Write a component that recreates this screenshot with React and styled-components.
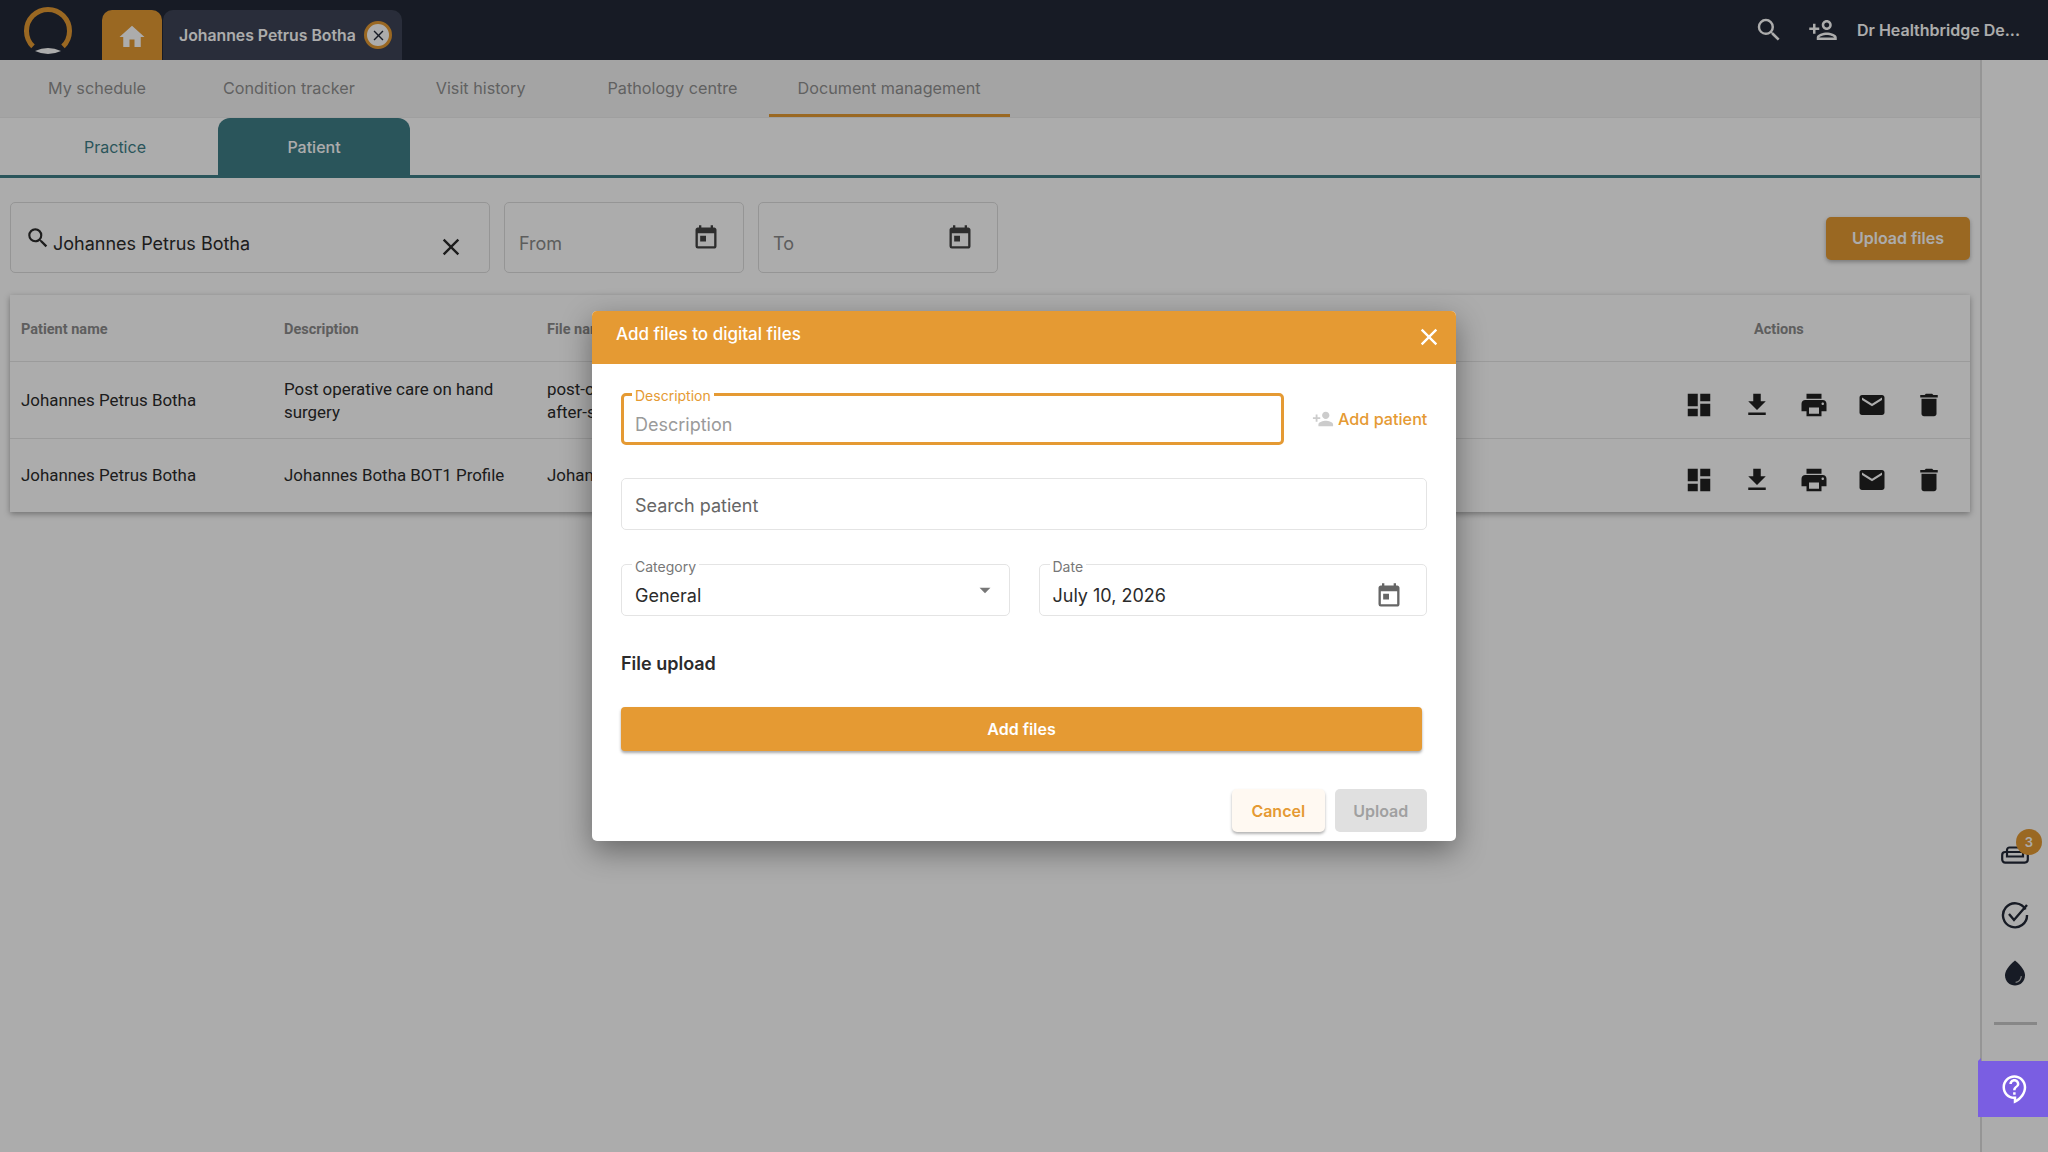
import React from 'react'
import styled, { createGlobalStyle } from 'styled-components'
import {
  MdHome, MdSearch, MdClose, MdToday, MdDashboard, MdFileDownload, MdPrint,
  MdEmail, MdDelete, MdOutlinePersonAdd, MdPersonAdd, MdArrowDropDown,
  MdOutlineContactSupport
} from 'react-icons/md'

const ORANGE = '#e59a33'
const TEAL = '#3f7f88'
const SANS = 'Inter, "Noto Sans", sans-serif'
const TABLE = 'Roboto, sans-serif'

const Global = createGlobalStyle`
  html, body { margin: 0; height: 100%; background: #fff; }
  * { box-sizing: border-box; }
  body { font-family: ${SANS}; overflow: hidden; }
`

const Page = styled.div`
  display: flex;
  flex-direction: column;
  width: 2048px;
  height: 1152px;
  position: relative;
  overflow: hidden;
`

const Header = styled.header`
  display: flex;
  align-items: flex-end;
  height: 60px;
  flex: none;
  background: #232937;
  padding-left: 24px;
`

const Logo = styled.svg`
  width: 48px;
  height: 50px;
  margin: 0 30px 5px 0;
`

const HomeTab = styled.div`
  width: 60px;
  height: 50px;
  background: ${ORANGE};
  border-radius: 10px 10px 0 0;
  color: #fff;
  display: flex;
  align-items: center;
  justify-content: center;
  font-size: 30px;
  padding-top: 4px;
`

const PatientTab = styled.div`
  display: flex;
  align-items: center;
  width: 239px;
  height: 50px;
  margin-left: 1px;
  padding: 0 10px 0 16px;
  background: #3d4456;
  border-radius: 10px 10px 0 0;
  color: #fff;
  font-size: 15.8px;
  font-weight: 600;
  justify-content: space-between;
`

const TabClose = styled.span`
  width: 28px;
  height: 28px;
  border-radius: 50%;
  background: #fff;
  border: 3px solid ${ORANGE};
  color: #232937;
  display: flex;
  align-items: center;
  justify-content: center;
  font-size: 17px;
`

const HeaderRight = styled.div`
  display: flex;
  align-items: center;
  margin-left: auto;
  height: 60px;
  color: #fff;
`

const HeaderIcon = styled.span`
  display: flex;
  font-size: ${p => p.$size}px;
  margin-right: ${p => p.$gap}px;
`

const UserName = styled.span`
  font-size: 16px;
  font-weight: 600;
  width: 182px;
  margin-right: 9px;
  white-space: nowrap;
`

const Body = styled.div`
  display: flex;
  flex: 1;
  min-height: 0;
`

const Main = styled.main`
  width: 1980px;
  flex: none;
  display: flex;
  flex-direction: column;
`

const Nav = styled.nav`
  display: flex;
  height: 58px;
  padding-left: 19px;
  background: #f4f4f4;
  border-bottom: 1px solid #ececec;
`

const NavItem = styled.div`
  display: flex;
  align-items: center;
  padding: 2px 29px 0;
  margin-left: ${p => p.$offset || 0}px;
  font-size: 16.2px;
  color: #909090;
  border-bottom: 3px solid ${p => (p.$active ? ORANGE : 'transparent')};
`

const SubTabs = styled.div`
  display: flex;
  height: 60px;
  padding-left: 19px;
  gap: 7px;
  border-bottom: 3px solid ${TEAL};
`

const SubTab = styled.div`
  width: 192px;
  display: flex;
  align-items: center;
  justify-content: center;
  font-size: 16px;
  font-weight: ${p => (p.$active ? 500 : 400)};
  border-radius: 12px 12px 0 0;
  color: ${p => (p.$active ? '#fff' : TEAL)};
  background: ${p => (p.$active ? TEAL : 'transparent')};
`

const Filters = styled.div`
  display: flex;
  align-items: center;
  gap: 14px;
  padding: 24px 10px 0;
`

const FilterBox = styled.div`
  width: ${p => p.$width}px;
  height: 71px;
  flex: none;
  border: 1px solid #ddd;
  border-radius: 5px;
  display: flex;
  align-items: center;
  justify-content: space-between;
  padding: 0 ${p => (p.$muted ? 23 : 24)}px 0 14px;
  font-size: 18px;
  color: ${p => (p.$muted ? '#8a8a8a' : '#2b2b2b')};
`

const FilterText = styled.span`
  padding-top: 11px;
`

const SearchValue = styled.span`
  display: flex;
  align-items: center;
  flex: 1;
  gap: 2px;
  font-size: 18px;
`

const ClearIcon = styled.span`
  display: flex;
  font-size: 28px;
  padding-top: 19px;
`

const UploadButton = styled.button`
  margin: 1px 0 0 auto;
  width: 144px;
  height: 43px;
  border: 0;
  border-radius: 5px;
  background: ${ORANGE};
  color: #fff;
  font: 600 16px ${SANS};
  box-shadow: 0 2px 4px rgba(0, 0, 0, .3);
`

const Card = styled.section`
  margin: 22px 10px 0;
  box-shadow: 0 2px 6px rgba(0, 0, 0, .35);
  font-family: ${TABLE};
`

const Row = styled.div`
  display: grid;
  grid-template-columns: 263px 263px 1fr 286px;
  align-items: center;
  height: ${p => p.$h}px;
  padding-left: 11px;
  padding-top: ${p => p.$pt || 0}px;
  border-bottom: ${p => (p.$last ? 'none' : '1px solid #e6e6e6')};
  font-size: 16.9px;
  line-height: 23.5px;
  color: #2b2b2b;
`

const HeadCell = styled.div`
  font-size: 14.5px;
  font-weight: 700;
  color: #8c8c8c;
  padding-top: 3px;
  padding-left: ${p => p.$indent || 0}px;
`

const Actions = styled.div`
  display: flex;
  gap: 27.5px;
  padding-top: 8px;
  font-size: 30px;
  color: #222;
`

const Sidebar = styled.aside`
  flex: 1;
  border-left: 2px solid #ddd;
  display: flex;
  flex-direction: column;
  align-items: center;
  padding-top: 779px;
  color: #232937;
`

const RailIcon = styled.div`
  position: relative;
  width: 32px;
  height: 32px;
  margin-bottom: ${p => p.$mb || 26}px;
  display: flex;
  align-items: center;
  justify-content: center;
`

const Badge = styled.span`
  position: absolute;
  top: -10px;
  right: -11px;
  width: 26px;
  height: 26px;
  border-radius: 50%;
  background: ${ORANGE};
  color: #fff;
  font-size: 13px;
  font-weight: 600;
  display: flex;
  align-items: center;
  justify-content: center;
`

const RailLine = styled.div`
  width: 43px;
  height: 3px;
  background: #c8c8c8;
  margin-top: 7px;
`

const Overlay = styled.div`
  position: absolute;
  inset: 0;
  background: rgba(0, 0, 0, .325);
`

const HelpButton = styled.div`
  position: absolute;
  left: 1978px;
  top: 1061px;
  width: 70px;
  height: 56px;
  padding-left: 4px;
  background: #7a5ee2;
  color: #fff;
  font-size: 30px;
  display: flex;
  align-items: center;
  justify-content: center;
  &::before {
    content: '';
    position: absolute;
    left: 0;
    top: -3px;
    border-left: 3px solid transparent;
    border-bottom: 3px solid #7a5ee2;
  }
`

const Modal = styled.div`
  position: absolute;
  left: 592px;
  top: 311px;
  width: 864px;
  height: 530px;
  background: #fff;
  border-radius: 5px;
  overflow: hidden;
  box-shadow: 0 10px 30px rgba(0, 0, 0, .4);
  display: flex;
  flex-direction: column;
`

const ModalHead = styled.div`
  height: 53px;
  flex: none;
  background: ${ORANGE};
  color: #fff;
  display: flex;
  justify-content: space-between;
  padding: 13px 13px 0 24px;
  font-size: 17px;
  font-weight: 500;
`

const ModalClose = styled.span`
  font-size: 28px;
  display: flex;
  height: 28px;
  margin-top: -1px;
`

const ModalBody = styled.div`
  flex: 1;
  padding: 29px 29px 9px;
  display: flex;
  flex-direction: column;
`

const FieldRow = styled.div`
  display: flex;
  align-items: ${p => p.$align || 'stretch'};
  gap: ${p => p.$gap || 0}px;
  margin-bottom: ${p => p.$mb || 0}px;
`

const Field = styled.div`
  position: relative;
  flex: ${p => (p.$w ? 'none' : 1)};
  width: ${p => (p.$w ? p.$w + 'px' : 'auto')};
  height: 52px;
  border: ${p => (p.$focus ? `3px solid ${ORANGE}` : '1px solid #e4e4e4')};
  border-radius: 5px;
  padding: ${p => (p.$focus ? '0 11px' : '0 13px')};
  display: flex;
  align-items: center;
  justify-content: space-between;
  font-size: 18px;
  color: ${p => p.$color || '#2b2b2b'};
`

const FieldValue = styled.span`
  padding-top: ${p => (p.$labeled ? 10 : 2)}px;
`

const FieldIcon = styled.span`
  display: flex;
  font-size: ${p => p.$size}px;
  color: ${p => p.$color};
  margin: ${p => p.$margin};
`

const FloatLabel = styled.span`
  position: absolute;
  left: ${p => (p.$focus ? '8px' : '10px')};
  top: ${p => (p.$focus ? '-8px' : '-6px')};
  padding: 0 3px;
  background: #fff;
  font-size: 14px;
  line-height: 16px;
  color: ${p => (p.$focus ? ORANGE : '#777')};
`

const AddPatient = styled.div`
  display: flex;
  align-items: center;
  gap: 4px;
  margin-left: 28px;
  color: ${ORANGE};
  font-size: 16.2px;
  font-weight: 500;
  white-space: nowrap;
`

const PersonIcon = styled.span`
  display: flex;
  font-size: 22px;
  color: #ccc;
`

const SectionTitle = styled.div`
  font-size: 18px;
  font-weight: 600;
  color: #2b2b2b;
  margin: 37px 0 32px;
  line-height: 22px;
`

const AddFiles = styled.button`
  width: 801px;
  height: 44px;
  border: 0;
  border-radius: 4px;
  background: ${ORANGE};
  color: #fff;
  font: 600 16px ${SANS};
  box-shadow: 0 2px 3px rgba(0, 0, 0, .35);
`

const Footer = styled.div`
  display: flex;
  justify-content: flex-end;
  gap: 10px;
  margin-top: 38px;
`

const FootButton = styled.button`
  width: 92.5px;
  height: 43px;
  border: 0;
  border-radius: 5px;
  font: 600 16px ${SANS};
  background: ${p => (p.$primary ? '#e0e0e0' : '#fff9f2')};
  color: ${p => (p.$primary ? '#a0a0a0' : ORANGE)};
  box-shadow: ${p => (p.$primary ? 'none' : '0 2px 3px rgba(0,0,0,.3)')};
`

function RowIcons () {
  return (
    <Actions>
      <MdDashboard /><MdFileDownload /><MdPrint /><MdEmail /><MdDelete />
    </Actions>
  )
}

export default function App () {
  return (
    <Page>
      <Global />
      <Header>
        <Logo viewBox="0 0 48 50">
          <path d="M9 41.4 A21.5 21.5 0 1 1 39 41.4" fill="none" stroke={ORANGE} strokeWidth="5" />
          <path d="M11 46 Q24 40 37 46 Q24 52 11 46 Z" fill="#fff" />
        </Logo>
        <HomeTab><MdHome /></HomeTab>
        <PatientTab>
          Johannes Petrus Botha
          <TabClose><MdClose /></TabClose>
        </PatientTab>
        <HeaderRight>
          <HeaderIcon $size={30} $gap={24}><MdSearch /></HeaderIcon>
          <HeaderIcon $size={30} $gap={19}><MdOutlinePersonAdd /></HeaderIcon>
          <UserName>Dr Healthbridge De...</UserName>
        </HeaderRight>
      </Header>
      <Body>
        <Main>
          <Nav>
            <NavItem>My schedule</NavItem>
            <NavItem $offset={19}>Condition tracker</NavItem>
            <NavItem $offset={23}>Visit history</NavItem>
            <NavItem $offset={24}>Pathology centre</NavItem>
            <NavItem $offset={2} $active>Document management</NavItem>
          </Nav>
          <SubTabs>
            <SubTab>Practice</SubTab>
            <SubTab $active>Patient</SubTab>
          </SubTabs>
          <Filters>
            <FilterBox $width={480}>
              <SearchValue><MdSearch size={26} /><FilterText>Johannes Petrus Botha</FilterText></SearchValue>
              <ClearIcon><MdClose /></ClearIcon>
            </FilterBox>
            <FilterBox $width={240} $muted><FilterText>From</FilterText><MdToday size={28} color="#444" /></FilterBox>
            <FilterBox $width={240} $muted><FilterText>To</FilterText><MdToday size={28} color="#444" /></FilterBox>
            <UploadButton>Upload files</UploadButton>
          </Filters>
          <Card>
            <Row $h={67}>
              <HeadCell>Patient name</HeadCell>
              <HeadCell>Description</HeadCell>
              <HeadCell>File name</HeadCell>
              <HeadCell $indent={70}>Actions</HeadCell>
            </Row>
            <Row $h={77} $pt={2}>
              <div>Johannes Petrus Botha</div>
              <div>Post operative care on hand surgery</div>
              <div>post-op-care-<br />after-surgery.pdf</div>
              <RowIcons />
            </Row>
            <Row $h={73} $last>
              <div>Johannes Petrus Botha</div>
              <div>Johannes Botha BOT1 Profile</div>
              <div>Johannes Botha BOT1 Profile.pdf</div>
              <RowIcons />
            </Row>
          </Card>
        </Main>
        <Sidebar>
          <RailIcon $mb={28}>
            <svg width="28" height="18" viewBox="0 0 28 18" fill="none" stroke="currentColor" strokeWidth="2.2">
              <path d="M6 7V4a2.5 2.5 0 0 1 2.5-2.5h11A2.5 2.5 0 0 1 22 4v3" />
              <rect x="1.2" y="6" width="25.6" height="10.6" rx="3" />
              <path d="M6 7v3.5h16V7" />
            </svg>
            <Badge>3</Badge>
          </RailIcon>
          <RailIcon>
            <svg width="30" height="30" viewBox="0 0 30 30" fill="none" stroke="currentColor" strokeWidth="2.4">
              <path d="M25.5 9.5A12 12 0 1 0 27 15" />
              <path d="M9 14l5 6L27 5" />
            </svg>
          </RailIcon>
          <RailIcon>
            <svg width="30" height="30" viewBox="0 0 24 24">
              <path fill="currentColor" d="M12 2c-5.33 4.55-8 8.48-8 11.8 0 4.98 3.8 8.2 8 8.2s8-3.22 8-8.2c0-3.32-2.67-7.25-8-11.8z" />
              <path fill="none" stroke="#c4c4c4" strokeWidth="1" d="M17 14.5a5 5 0 0 1-4.5 5" />
            </svg>
          </RailIcon>
          <RailLine />
        </Sidebar>
      </Body>
      <Overlay />
      <HelpButton><MdOutlineContactSupport /></HelpButton>
      <Modal>
        <ModalHead>
          Add files to digital files
          <ModalClose><MdClose /></ModalClose>
        </ModalHead>
        <ModalBody>
          <FieldRow $align="center" $mb={33}>
            <Field $w={663} $focus $color="#9a9a9a">
              <FloatLabel $focus>Description</FloatLabel>
              <FieldValue $labeled>Description</FieldValue>
            </Field>
            <AddPatient><PersonIcon><MdPersonAdd /></PersonIcon>Add patient</AddPatient>
          </FieldRow>
          <FieldRow $mb={34}>
            <Field $color="#666"><FieldValue>Search patient</FieldValue></Field>
          </FieldRow>
          <FieldRow $gap={29}>
            <Field>
              <FloatLabel>Category</FloatLabel>
              <FieldValue $labeled>General</FieldValue>
              <FieldIcon $size={26} $color="#777" $margin="-1px -2px 0 0"><MdArrowDropDown /></FieldIcon>
            </Field>
            <Field>
              <FloatLabel>Date</FloatLabel>
              <FieldValue $labeled>July 10, 2026</FieldValue>
              <FieldIcon $size={28} $color="#666" $margin="12px 10px 0 0"><MdToday /></FieldIcon>
            </Field>
          </FieldRow>
          <SectionTitle>File upload</SectionTitle>
          <AddFiles>Add files</AddFiles>
          <Footer>
            <FootButton>Cancel</FootButton>
            <FootButton $primary>Upload</FootButton>
          </Footer>
        </ModalBody>
      </Modal>
    </Page>
  )
}
